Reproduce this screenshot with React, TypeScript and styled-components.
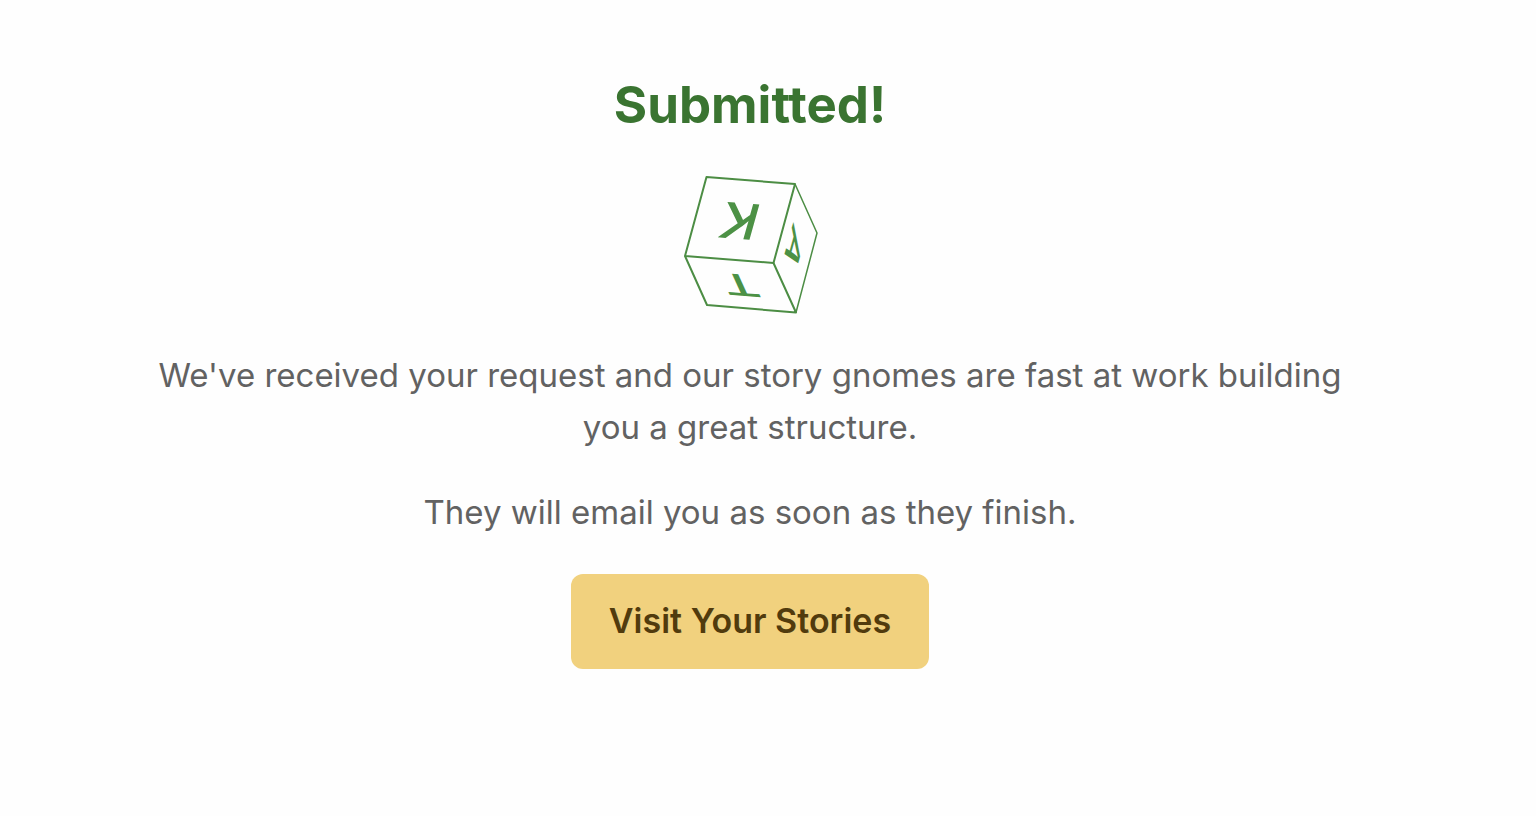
import React from "react";
import styled, { createGlobalStyle } from "styled-components";

const GlobalStyle = createGlobalStyle`
  *, *::before, *::after { box-sizing: border-box; }
  body {
    margin: 0;
    background: #fefefe;
    font-family: Inter, "Liberation Sans", sans-serif;
  }
`;

const Page = styled.main`
  display: flex;
  justify-content: center;
  padding: 73px 36px 64px 0;
`;

const Confirmation = styled.section`
  display: flex;
  flex-direction: column;
  align-items: center;
  width: 100%;
  max-width: 1200px;
  text-align: center;
`;

const Title = styled.h1`
  margin: 0 0 36px;
  color: #3a7431;
  font-size: 51px;
  font-weight: 700;
  line-height: 64px;
`;

const Cube = styled.svg`
  display: block;
  width: 140px;
  height: 144px;
  margin-bottom: 32px;
`;

const Message = styled.p`
  margin: 0 0 33px;
  color: #626262;
  font-size: 33px;
  line-height: 52px;
`;

const StoriesButton = styled.button`
  margin-top: 3px;
  padding: 21px 38px 22px;
  border: 0;
  border-radius: 12px;
  background: #f1d17e;
  color: #513b0d;
  font-family: inherit;
  font-size: 34px;
  font-weight: 600;
  line-height: 52px;
  cursor: pointer;
`;

const faces = [
  { letter: "K", matrix: "matrix(-0.947 -0.074 0.234 -0.84 60 48)" },
  { letter: "T", matrix: "matrix(-0.947 -0.074 -0.24 -0.52 60 112)" },
  { letter: "A", matrix: "matrix(-0.234 0.84 -0.24 -0.52 114 76)" },
];

function LetterCube() {
  return (
    <Cube viewBox="0 0 140 144" aria-hidden="true">
      <g fill="none" stroke="#4c8d44" strokeLinejoin="round">
        <path strokeWidth="2" d="M26.5 4 115 11 93.5 90 5 83Z" />
        <path strokeWidth="2" d="M5 83 27 132 116 139.5 93.5 90" />
        <path strokeWidth="1.5" d="M115 11 137 60 116 139.5" />
      </g>
      <g fill="#4c9145" fontSize="58" fontWeight="500" textAnchor="middle">
        {faces.map(({ letter, matrix }) => (
          <text key={letter} y="21" transform={matrix}>
            {letter}
          </text>
        ))}
      </g>
    </Cube>
  );
}

export default function App() {
  return (
    <>
      <GlobalStyle />
      <Page>
        <Confirmation>
          <Title>Submitted!</Title>
          <LetterCube />
          <Message>
            We've received your request and our story gnomes are fast at work
            building you a great structure.
          </Message>
          <Message>They will email you as soon as they finish.</Message>
          <StoriesButton type="button">Visit Your Stories</StoriesButton>
        </Confirmation>
      </Page>
    </>
  );
}
